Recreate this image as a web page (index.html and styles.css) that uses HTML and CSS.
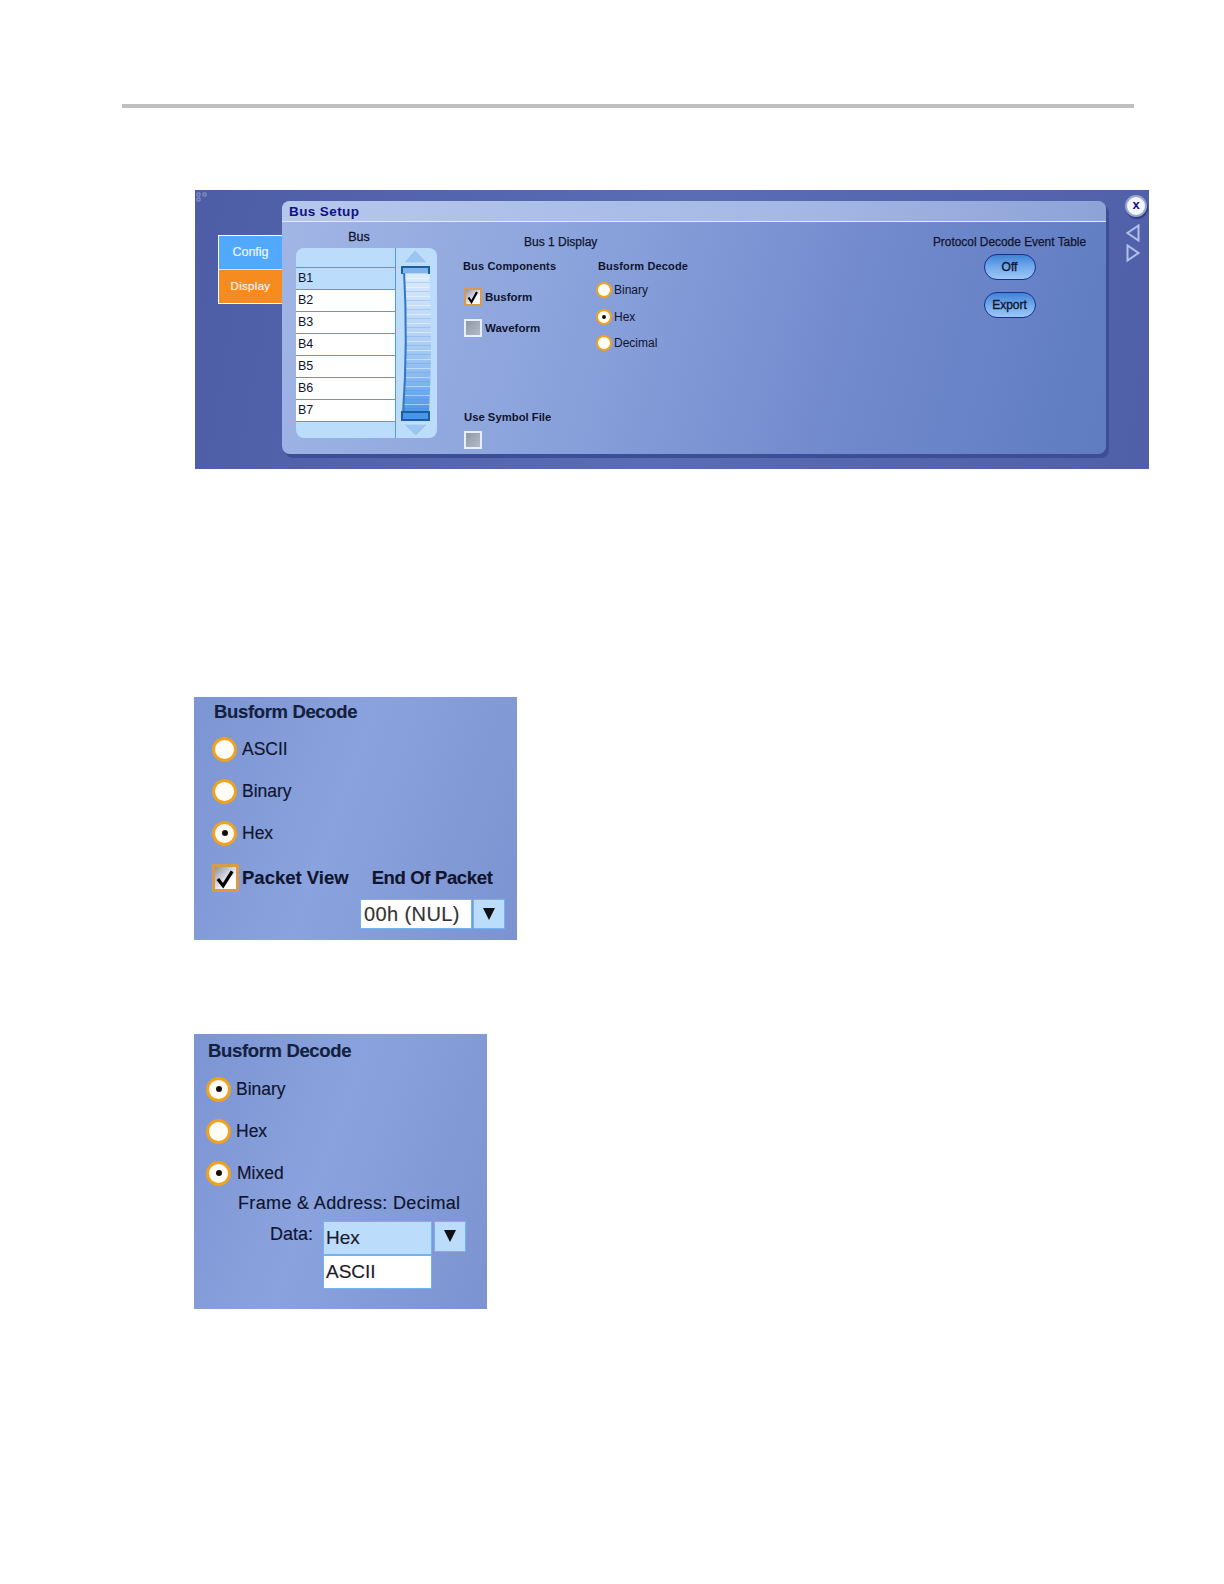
FILE: index.html
```html
<!DOCTYPE html>
<html lang="en">
<head>
  <meta charset="UTF-8" />
  <title>Bus Setup</title>
  <link rel="stylesheet" href="styles.css">
</head>
<body>
  <div class="rule"></div>

  <!-- Bus setup window -->
  <div class="shot">
    <svg class="corner" width="12" height="11" viewBox="0 0 12 11"><path d="M1 1h3v3H1zM7 1h3v3H7zM1 6h3v3H1z" fill="none" stroke="#8a98cc" stroke-width="1"/></svg>
    <div class="tabs">
      <div class="tab tab-config">Config</div>
      <div class="tab tab-display">Display</div>
    </div>
    <div class="dialog">
      <div class="dialog-title">Bus Setup</div>
      <div class="dialog-body">
        <div class="bus-col">
          <div class="bus-label">Bus</div>
          <div class="bus-list">
            <div class="bus-names">
              <div class="bus-head"></div>
              <div class="bus-row selected">B1</div>
              <div class="bus-row">B2</div>
              <div class="bus-row">B3</div>
              <div class="bus-row">B4</div>
              <div class="bus-row">B5</div>
              <div class="bus-row">B6</div>
              <div class="bus-row">B7</div>
            </div>
            <svg class="slider" width="41" height="190" viewBox="0 0 41 190">
              <defs>
                <linearGradient id="knob" x1="0" y1="0" x2="0" y2="1">
                  <stop offset="0" stop-color="#dcecfc"/>
                  <stop offset="0.45" stop-color="#b5d2f5"/>
                  <stop offset="0.75" stop-color="#86b9f1"/>
                  <stop offset="1" stop-color="#4896ea"/>
                </linearGradient>
                <pattern id="ridges" width="41" height="9" patternUnits="userSpaceOnUse">
                  <rect y="3" width="41" height="1" fill="#ffffff" opacity="0.45"/>
                  <rect y="7" width="41" height="1" fill="#3f83d4" opacity="0.22"/>
                </pattern>
              </defs>
              <path d="M19 1.5 L32 15 H7 Z" fill="#9cc6f2" stroke="#cfe4fa" stroke-width="1"/>
              <path d="M8 22 Q12 95 7 166 H33 Q37 95 33 22 Z" fill="url(#knob)"/>
              <path d="M8 22 Q12 95 7 166 H33 Q37 95 33 22 Z" fill="url(#ridges)"/>
              <path d="M8 22 Q12 95 7 166" fill="none" stroke="#3276c4" stroke-width="2"/>
              <rect x="6" y="19" width="27" height="6" fill="#7fb4ec"/>
              <path d="M6 26 V19 H33 V26" fill="none" stroke="#1c5f9f" stroke-width="2"/>
              <rect x="6" y="164" width="27" height="8" fill="#4896ea" stroke="#1c5f9f" stroke-width="2"/>
              <path d="M7 176 H32 L20 188.5 Z" fill="#9cc6f2" stroke="#cfe4fa" stroke-width="1"/>
            </svg>
          </div>
        </div>

        <div class="display-group">
          <div class="group-title">Bus 1 Display</div>
          <div class="display-cols">
            <div class="components">
              <div class="small-head">Bus Components</div>
              <div class="check-row first">
                <span class="check check-on">
                  <svg width="14" height="14" viewBox="0 0 14 14"><path d="M2.5 7.5 L5.5 12 L11 2" fill="none" stroke="#000" stroke-width="2.2"/></svg>
                </span>
                <span>Busform</span>
              </div>
              <div class="check-row second">
                <span class="check"></span>
                <span>Waveform</span>
              </div>
              <div class="small-head symbol-head">Use Symbol File</div>
              <span class="check symbol-check"></span>
            </div>
            <div class="decode">
              <div class="small-head">Busform Decode</div>
              <div class="radio-list">
                <div class="radio-row"><span class="radio"></span>Binary</div>
                <div class="radio-row"><span class="radio radio-on"></span>Hex</div>
                <div class="radio-row"><span class="radio"></span>Decimal</div>
              </div>
            </div>
          </div>
        </div>

        <div class="event-col">
          <div class="group-title center">Protocol Decode Event Table</div>
          <div class="pill first-pill">Off</div>
          <div class="pill">Export</div>
        </div>
      </div>
    </div>
    <div class="window-btns">
      <div class="close-btn">x</div>
      <svg class="arrow" width="14" height="18" viewBox="0 0 14 18"><path d="M12.5 1.5 V16.5 L1.5 9 Z" fill="none" stroke="#b0bfe9" stroke-width="2"/></svg>
      <svg class="arrow" width="14" height="18" viewBox="0 0 14 18"><path d="M1.5 1.5 V16.5 L12.5 9 Z" fill="none" stroke="#b0bfe9" stroke-width="2"/></svg>
    </div>
  </div>

  <!-- Decode options, packet view -->
  <div class="panel panel-packet">
    <div class="panel-title">Busform Decode</div>
    <div class="big-radios">
      <div class="big-row"><span class="radio big"></span>ASCII</div>
      <div class="big-row"><span class="radio big"></span>Binary</div>
      <div class="big-row"><span class="radio big radio-on"></span>Hex</div>
    </div>
    <div class="packet-row">
      <span class="check check-on big-check">
        <svg width="22" height="22" viewBox="0 0 22 22"><path d="M3 12 L8.5 19 L18 4" fill="none" stroke="#000" stroke-width="3.4"/></svg>
      </span>
      <span class="packet-text">Packet View</span>
      <span class="packet-text end-text">End Of Packet</span>
    </div>
    <div class="drop-row nul-drop">
      <div class="drop-value">00h (NUL)</div>
      <div class="drop-btn"><span class="tri"></span></div>
    </div>
  </div>

  <!-- Decode options, mixed -->
  <div class="panel panel-mixed">
    <div class="panel-title">Busform Decode</div>
    <div class="big-radios">
      <div class="big-row"><span class="radio big radio-on"></span>Binary</div>
      <div class="big-row"><span class="radio big"></span>Hex</div>
      <div class="big-row mixed-row"><span class="radio big radio-on"></span>Mixed</div>
    </div>
    <div class="frame-text">Frame &amp; Address: Decimal</div>
    <div class="data-row">
      <div class="data-label">Data:</div>
      <div class="data-options">
        <div class="data-opt selected">Hex</div>
        <div class="data-opt">ASCII</div>
      </div>
      <div class="drop-btn data-btn"><span class="tri"></span></div>
    </div>
  </div>
</body>
</html>
```

FILE: styles.css
```css
body {
  margin: 0;
  background: #fff;
  font-family: "Liberation Sans", Arial, sans-serif;
  color: #10142e;
}

.rule {
  width: 1012px;
  height: 4px;
  margin: 104px 0 0 122px;
  background: #bfbfbf;
}

/* main window */
.shot {
  position: relative;
  display: flex;
  align-items: flex-start;
  box-sizing: border-box;
  width: 954px;
  height: 279px;
  margin: 82px 0 0 195px;
  padding: 11px 0 0 23px;
  background: linear-gradient(100deg, #4d5ea6 0%, #5a6cb2 50%, #4f60a8 100%);
}

.corner {
  position: absolute;
  left: 1px;
  top: 2px;
}

.tabs {
  flex: none;
  box-sizing: border-box;
  width: 64px;
  margin-top: 34px;
  border: 1px solid #fff;
  border-right: none;
}

.tab {
  height: 33px;
  line-height: 32px;
  text-align: center;
  font-size: 12.5px;
  color: #eef4ff;
  -webkit-text-stroke: 0.2px;
}

.tab-config { background: #52a9fb; border-bottom: 1px solid #cfe2fa; }
.tab-display { background: #f68b1f; font-size: 11.5px; letter-spacing: 0.3px; }

.dialog {
  flex: none;
  width: 824px;
  height: 253px;
  border-radius: 8px;
  background: linear-gradient(105deg, #a2b6e5 0%, #8ba3dc 35%, #7089cc 70%, #5f7cc1 100%);
  box-shadow: 3px 4px 0 #3d4d96;
}

.dialog-title {
  box-sizing: border-box;
  height: 21px;
  padding-left: 7px;
  border-bottom: 1px solid #e4ecfb;
  border-radius: 8px 8px 0 0;
  background: linear-gradient(90deg, #b5c7ec 0%, #a6b9e6 60%, #8da3d6 100%);
  font-size: 13.5px;
  font-weight: bold;
  line-height: 22px;
  letter-spacing: 0.4px;
  color: #10108a;
}

.dialog-body {
  display: flex;
  align-items: flex-start;
}

.bus-col {
  flex: none;
  width: 141px;
  margin-left: 14px;
}

.bus-label {
  padding: 8px 15px 0 0;
  text-align: center;
  font-size: 12.5px;
  line-height: 15px;
  -webkit-text-stroke: 0.3px;
}

.bus-list {
  display: flex;
  height: 190px;
  margin-top: 3px;
  border-radius: 8px;
  background: #bcdcfb;
  overflow: hidden;
}

.bus-names {
  flex: none;
  width: 99px;
  border-right: 1px solid #4f9be8;
}

.bus-head { height: 19px; }

.bus-row {
  box-sizing: border-box;
  height: 22px;
  padding-left: 2px;
  border-top: 1px solid #4f9be8;
  background: #fff;
  font-size: 12.5px;
  line-height: 20px;
  color: #10142e;
}

.bus-row:last-child {
  height: 23px;
  border-bottom: 1px solid #4f9be8;
}

.bus-row.selected { background: #bcdcfb; }

.slider { flex: none; }

.display-group {
  flex: none;
  width: 240px;
  margin-left: 26px;
}

.group-title {
  padding: 13px 0 0 61px;
  font-size: 12px;
  line-height: 15px;
  white-space: nowrap;
  -webkit-text-stroke: 0.25px;
}

.group-title.center {
  padding-left: 0;
  text-align: center;
  font-size: 11.9px;
}

.display-cols {
  display: flex;
  margin-top: 9px;
}

.components {
  flex: none;
  width: 135px;
}

.small-head {
  font-size: 11px;
  font-weight: bold;
  line-height: 15px;
  letter-spacing: 0.15px;
  white-space: nowrap;
}

.check-row {
  display: flex;
  align-items: center;
  gap: 3px;
  margin-left: 1px;
  font-size: 11.5px;
  font-weight: bold;
}

.check-row.first { margin-top: 14px; }
.check-row.second { margin-top: 13px; }

.check {
  display: flex;
  align-items: center;
  justify-content: center;
  box-sizing: border-box;
  flex: none;
  width: 18px;
  height: 18px;
  border: 2px solid #e8effc;
  background: linear-gradient(135deg, #8f98a8, #b4bac6);
}

.check-on {
  border-color: #d99a4c;
  background: linear-gradient(135deg, #8a92a4, #ffffff 70%);
}

.symbol-head {
  margin: 73px 0 0 1px;
  font-size: 11.3px;
  letter-spacing: 0;
}

.symbol-check {
  margin: 6px 0 0 1px;
}

.radio-list {
  display: flex;
  flex-direction: column;
  gap: 10.5px;
  margin: 8px 0 0 -2px;
}

.radio-row {
  display: flex;
  align-items: center;
  gap: 2px;
  height: 16px;
  font-size: 12px;
}

.radio {
  position: relative;
  display: block;
  box-sizing: border-box;
  flex: none;
  width: 16px;
  height: 16px;
  border: 2.5px solid #efa21f;
  border-radius: 50%;
  background: #fffdf5;
}

.radio-on::after {
  content: "";
  position: absolute;
  left: 50%;
  top: 50%;
  width: 4px;
  height: 4px;
  margin: -2px 0 0 -2px;
  border-radius: 50%;
  background: #111;
}

.event-col {
  flex: none;
  width: 157px;
  margin-left: auto;
  margin-right: 18px;
}

.pill {
  box-sizing: border-box;
  width: 52px;
  height: 26px;
  margin: 12px auto 0;
  border: 1.5px solid #1b2f8c;
  border-radius: 13px;
  background: linear-gradient(180deg, #3f82d6 0%, #6da7ea 45%, #9cc8f5 100%);
  text-align: center;
  font-size: 12px;
  line-height: 24px;
  color: #10142e;
  -webkit-text-stroke: 0.35px;
}

.pill.first-pill { margin-top: 4px; }

.window-btns {
  display: flex;
  flex-direction: column;
  align-items: flex-start;
  margin: -6px 0 0 19px;
}

.close-btn {
  box-sizing: border-box;
  width: 22px;
  height: 22px;
  border: 2px solid #9aa6cf;
  border-radius: 50%;
  background: #f2f5fc;
  box-shadow: 1px 2px 1px #2f3d80;
  text-align: center;
  font-size: 13px;
  font-weight: bold;
  line-height: 15px;
  color: #10108a;
}

.arrow {
  margin: 2px 0 0 1px;
}

.close-btn + .arrow { margin-top: 7px; }

/* cropped option panels */
.panel {
  box-sizing: border-box;
  background: linear-gradient(110deg, #7c95d3 0%, #8aa3de 45%, #7b93d0 100%);
  -webkit-text-stroke: 0.15px;
}

.panel-packet {
  width: 323px;
  height: 243px;
  margin: 228px 0 0 194px;
  padding: 5px 0 0 20px;
}

.panel-mixed {
  width: 293px;
  height: 275px;
  margin: 94px 0 0 194px;
  padding: 7px 0 0 14px;
}

.panel-title {
  font-size: 18.5px;
  font-weight: bold;
  line-height: 20px;
  letter-spacing: -0.35px;
  color: #14203f;
}

.big-radios {
  display: flex;
  flex-direction: column;
  gap: 18px;
  margin: 15px 0 0 -2px;
}

.panel-mixed .big-radios {
  margin: 16px 0 0 -2px;
}

.big-row {
  display: flex;
  align-items: center;
  gap: 5px;
  height: 24px;
  font-size: 17.5px;
}

.mixed-row { gap: 6px; }

.radio.big {
  width: 25px;
  height: 25px;
  border-width: 3.5px;
}

.radio.big.radio-on::after {
  width: 6px;
  height: 6px;
  margin: -3px 0 0 -3px;
}

.packet-row {
  display: flex;
  align-items: center;
  margin: 19px 0 0 -2px;
}

.big-check {
  width: 27px;
  height: 28px;
  border-width: 3px;
}

.packet-text {
  margin-left: 3px;
  font-size: 18.5px;
  font-weight: bold;
  white-space: nowrap;
}

.packet-text.end-text {
  margin-left: 23px;
  letter-spacing: -0.35px;
}

.drop-row {
  display: flex;
  gap: 1px;
  margin: 7px 0 0 146px;
}

.drop-value {
  box-sizing: border-box;
  width: 112px;
  height: 30px;
  padding-left: 3px;
  border: 1px solid #6fb2f5;
  background: #fff;
  font-size: 20px;
  line-height: 28px;
  letter-spacing: 0.4px;
  color: #333;
}

.drop-btn {
  display: flex;
  justify-content: center;
  box-sizing: border-box;
  width: 32px;
  height: 30px;
  padding-top: 8px;
  border: 1px solid #6fb2f5;
  background: #bcdcfb;
}

.tri {
  width: 0;
  height: 0;
  border-left: 6px solid transparent;
  border-right: 6px solid transparent;
  border-top: 12px solid #111;
}

.frame-text {
  margin: 8px 0 0 30px;
  font-size: 18px;
  line-height: 20px;
  letter-spacing: 0.35px;
  white-space: nowrap;
}

.data-row {
  display: flex;
  margin: 8px 0 0 62px;
}

.data-label {
  width: 53px;
  padding-top: 3px;
  font-size: 18px;
  line-height: 20px;
}

.data-options {
  flex: none;
  width: 109px;
}

.data-opt {
  box-sizing: border-box;
  height: 34px;
  padding-left: 2px;
  border: 1px solid #6fb2f5;
  background: #fff;
  font-size: 19px;
  line-height: 32px;
  color: #1a1a2a;
}

.data-opt.selected { background: #bcdcfb; }

.data-btn {
  height: 31px;
  margin-left: 2px;
}
```
